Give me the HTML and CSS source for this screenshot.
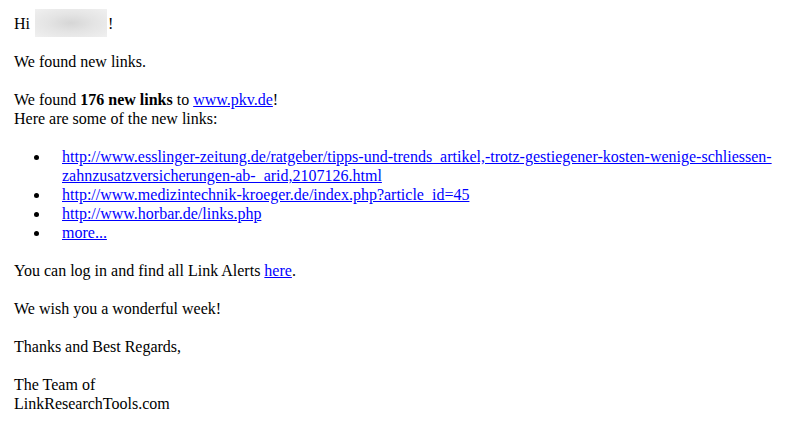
FILE: index.html
```html
<!DOCTYPE html>
<html>
    <head>
        <title>Link Alert</title>
        <link rel="stylesheet" href="styles.css">
    </head>
    <body>
        <div class="mail">
            <p>Hi <span class="hidden-name"><span class="blur"></span></span>!</p>
            <p>We found new links.</p>
            <p>We found <b>176 new links</b> to <a href="#">www.pkv.de</a>!<br />
            Here are some of the new links:</p>
            <ul>
                <li><a href="#">http://www.esslinger-zeitung.de/ratgeber/tipps-und-trends_artikel,-trotz-gestiegener-kosten-wenige-schliessen-zahnzusatzversicherungen-ab-_arid,2107126.html</a></li>
                <li><a href="#">http://www.medizintechnik-kroeger.de/index.php?article_id=45</a></li>
                <li><a href="#">http://www.horbar.de/links.php</a></li>
                <li><a href="#">more...</a></li>
            </ul>
            <p>You can log in and find all Link Alerts <a href="#">here</a>.</p>
            <p>We wish you a wonderful week!</p>
            <p>Thanks and Best Regards,</p>
            <p>The Team of<br />
            LinkResearchTools.com</p>
        </div>
    </body>
</html>
```

FILE: styles.css
```css
html, body {
    margin: 0;
    padding: 0;
    background: #FFF;
}
body {
    font-family: "Liberation Serif", "Times New Roman", serif;
    font-size: 16px;
    line-height: 19px;
    color: #000;
}
.mail {
    padding: 14px 14px 0 14px;
}
p {
    margin: 0 0 19px 0;
}
a {
    color: #0000FF;
}
ul {
    margin: 0 0 19px 0;
    padding-left: 36px;
}
li {
    padding-left: 12px;
}
.hidden-name {
    display: inline-block;
    position: relative;
    width: 72px;
    height: 19px;
    vertical-align: top;
    margin-left: 1px;
    margin-right: 1px;
}
.blur {
    position: absolute;
    left: 0;
    top: -5px;
    width: 72px;
    height: 28px;
    background: radial-gradient(ellipse at center, #D6D6D6 0%, #E4E4E4 45%, #F0F0F0 100%);
}
```
